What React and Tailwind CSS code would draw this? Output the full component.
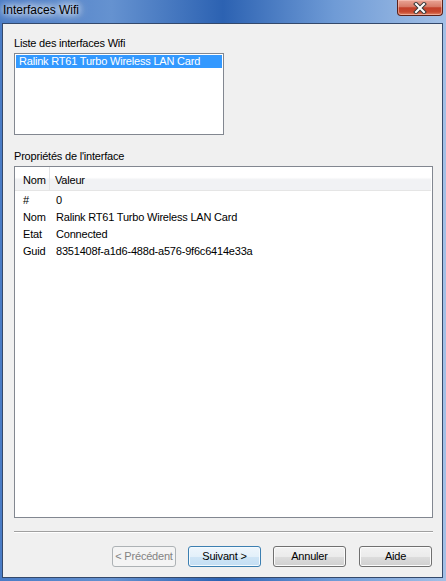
export default function App() {
  const props = [
    { k: '#', v: '0' },
    { k: 'Nom', v: 'Ralink RT61 Turbo Wireless LAN Card' },
    { k: 'Etat', v: 'Connected' },
    { k: 'Guid', v: '8351408f-a1d6-488d-a576-9f6c6414e33a' },
  ];

  const btn = 'h-[21px] rounded-[3px] border flex items-center justify-center leading-[13px]';
  const normalBtn = `${btn} border-[#707070] bg-[linear-gradient(#f2f2f2_0%,#ebebeb_50%,#dddddd_50%,#cfcfcf_100%)] shadow-[inset_0_0_0_1px_#fbfbfb]`;

  return (
    <div className="w-[446px] h-[581px] flex flex-col overflow-hidden bg-[linear-gradient(90deg,#4a7cc6_0%,#6592d0_25%,#2c62b2_50%,#6f9bd6_75%,#a3c0e6_100%)] font-['Liberation_Sans',Arial,sans-serif] text-[11px] text-black">
      {/* title bar */}
      <div className="h-[23px] flex justify-between items-start shrink-0">
        <span className="pl-[3px] pt-[3px] text-[12px] leading-[14px] [text-shadow:0_0_6px_#fff,0_0_10px_#fff,0_0_14px_#fff]">
          Interfaces Wifi
        </span>
        <div className="mr-[3px] w-[46px] h-[16px] rounded-b-[4px] border border-t-0 border-[#5b2119] bg-[linear-gradient(#e9a596_0%,#d77a67_45%,#c2402a_52%,#c8492f_80%,#e28a6c_100%)] shadow-[inset_0_0_0_1px_rgba(255,210,200,0.5)] flex items-center justify-center">
          <svg width="14" height="12" viewBox="0 0 14 12">
            <path d="M3 2 L11 10 M11 2 L3 10" stroke="#3a3a3a" strokeWidth="4" strokeLinecap="square" />
            <path d="M3 2 L11 10 M11 2 L3 10" stroke="#ffffff" strokeWidth="2" strokeLinecap="square" />
          </svg>
        </div>
      </div>

      {/* client area */}
      <div className="flex-1 ml-[2px] mr-[3px] mb-[3px] border border-[#34496b] bg-[#f0f0f0] pl-[11px] pr-[9px] pt-[13px] flex flex-col tracking-[-0.2px]">
        <div className="h-[13px] leading-[13px]">Liste des interfaces Wifi</div>
        <div className="mt-[3px] w-[210px] h-[82px] border border-[#828790] bg-white p-[1px]">
          <div className="h-[13px] leading-[13px] bg-[#3399ff] text-white pl-[3px]">
            Ralink RT61 Turbo Wireless LAN Card
          </div>
        </div>

        <div className="mt-[15px] h-[13px] leading-[13px]">Propriétés de l'interface</div>
        <div className="mt-[3px] h-[352px] border border-[#828790] bg-white flex flex-col">
          <div className="h-[24px] mr-[1px] flex border-b border-[#e5e5e5] bg-[linear-gradient(#ffffff_0%,#ffffff_45%,#f1f2f4_55%,#f1f2f4_100%)] shrink-0">
            <div className="w-[35px] pl-[8px] pt-[7px] leading-[13px] border-r border-[#e3e4e6]">Nom</div>
            <div className="pl-[5px] pt-[7px] leading-[13px]">Valeur</div>
          </div>
          <div className="mt-[1px] flex flex-col">
            {props.map(p => (
              <div key={p.k} className="h-[17px] leading-[17px] flex">
                <div className="w-[41px] pl-[8px]">{p.k}</div>
                <div>{p.v}</div>
              </div>
            ))}
          </div>
        </div>

        <div className="mt-[13px] h-[2px] border-t border-[#a0a0a0] border-b border-b-white" />

        <div className="mt-[13px] flex justify-end pr-[1px]">
          <div className={`${btn} w-[64px] border-[#adb2b5] bg-[#f4f4f4] text-[#838383]`}>&lt; Précédent</div>
          <div className={`${btn} ml-[12px] w-[73px] border-[#3c7fb1] bg-[linear-gradient(#eef6fc_0%,#e3f0fa_50%,#cfe5f6_50%,#c4def3_100%)] shadow-[inset_0_0_0_1px_#f4fafe]`}>Suivant &gt;</div>
          <div className={`${normalBtn} ml-[12px] w-[73px]`}>Annuler</div>
          <div className={`${normalBtn} ml-[13px] w-[73px]`}>Aide</div>
        </div>
      </div>
    </div>
  );
}
